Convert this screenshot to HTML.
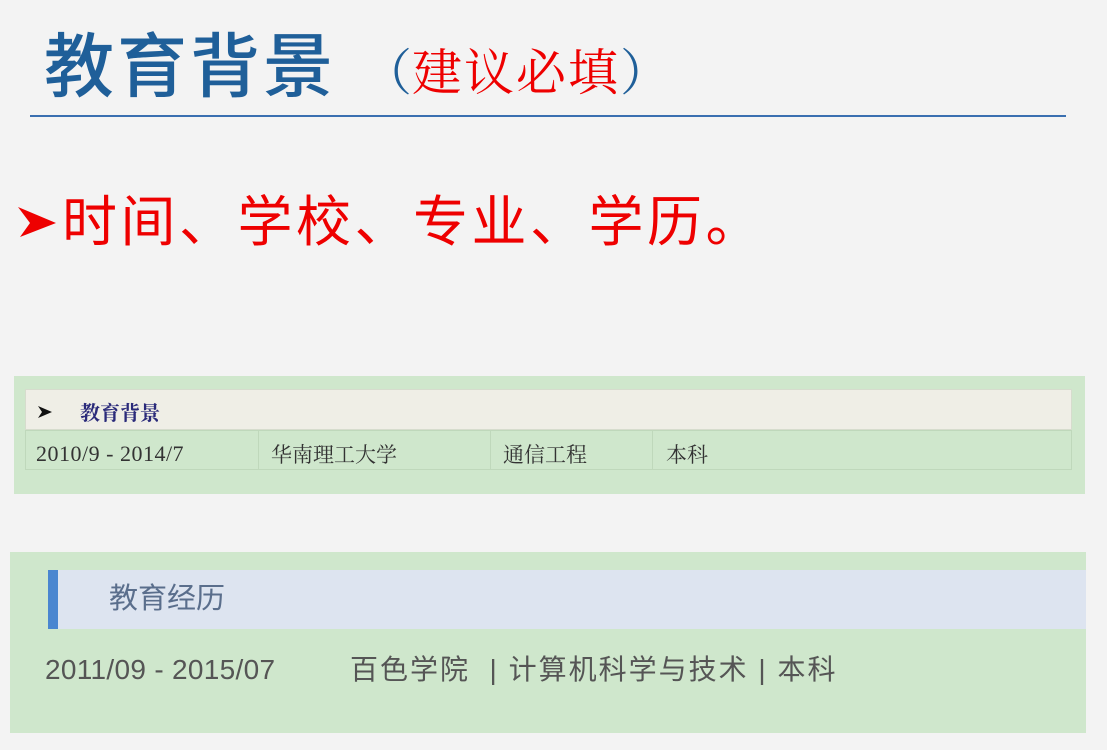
<!DOCTYPE html>
<html><head><meta charset="utf-8"><style>
body{margin:0;width:1107px;height:750px;background:#f3f3f3;position:relative;overflow:hidden;font-family:"Liberation Sans","Noto Sans CJK SC",sans-serif}
.a{position:absolute;white-space:nowrap}
</style></head><body>
<div class="a" style="left:44px;top:17px;font-size:70px;font-weight:500;color:#1f5f99;line-height:90px;letter-spacing:3px;font-family:'Noto Sans CJK SC',sans-serif">教育背景</div>
<div class="a" style="left:362px;top:34px;font-size:50px;line-height:70px;color:#1f5f99;font-family:'Noto Serif CJK SC',serif">（<span style="color:#e00;letter-spacing:2px">建议必填</span>）</div>
<div class="a" style="left:30px;top:115px;width:1036px;height:2px;background:#3a6fb0"></div>
<svg class="a" style="left:18px;top:205px" width="40" height="32" viewBox="0 0 40 32"><path d="M0 2 L38 18 L2 32 L12 18 Z" fill="#e00"/></svg>
<div class="a" style="left:62px;top:180px;font-size:55px;color:#e00;line-height:75px;letter-spacing:3.5px;font-family:'Noto Sans CJK SC',sans-serif">时间、学校、专业、学历。</div>

<div class="a" style="left:14px;top:376px;width:1071px;height:118px;background:#cfe7cc"></div>
<div class="a" style="left:25px;top:389px;width:1047px;height:41px;background:#efeee6;border:1px solid #d6dccd;box-sizing:border-box"></div>
<svg class="a" style="left:38px;top:406px" width="14" height="12" viewBox="0 0 14 12"><path d="M0 0 L14 6 L0 12 L4 6 Z" fill="#111"/></svg>
<div class="a" style="left:80px;top:400px;font-size:20px;color:#2a2a7a;line-height:24px;font-family:'Noto Serif CJK SC',serif;font-weight:bold">教育背景</div>
<div class="a" style="left:25px;top:430px;width:1047px;height:40px;border:1px solid #bfd8bb;box-sizing:border-box"></div>
<div class="a" style="left:258px;top:430px;width:1px;height:40px;background:#bfd8bb"></div>
<div class="a" style="left:490px;top:430px;width:1px;height:40px;background:#bfd8bb"></div>
<div class="a" style="left:652px;top:430px;width:1px;height:40px;background:#bfd8bb"></div>
<div class="a" style="left:36px;top:442px;font-size:22px;line-height:24px;color:#333;font-family:'Liberation Serif','Noto Serif CJK SC',serif;letter-spacing:0.5px">2010/9 - 2014/7</div>
<div class="a" style="left:271px;top:442px;font-size:21px;line-height:24px;color:#333;font-family:'Noto Serif CJK SC',serif">华南理工大学</div>
<div class="a" style="left:503px;top:442px;font-size:21px;line-height:24px;color:#333;font-family:'Noto Serif CJK SC',serif">通信工程</div>
<div class="a" style="left:666px;top:442px;font-size:21px;line-height:24px;color:#333;font-family:'Noto Serif CJK SC',serif">本科</div>

<div class="a" style="left:10px;top:552px;width:1076px;height:181px;background:#cfe7cc"></div>
<div class="a" style="left:48px;top:570px;width:1038px;height:59px;background:#dde4f0"></div>
<div class="a" style="left:48px;top:570px;width:10px;height:59px;background:#4a86d0"></div>
<div class="a" style="left:109px;top:580px;font-size:29px;line-height:38px;color:#5a6e8c">教育经历</div>
<div class="a" style="left:45px;top:651px;font-size:28px;line-height:38px;color:#555;letter-spacing:0.3px">2011/09 - 2015/07</div>
<div class="a" style="left:350px;top:651px;font-size:28px;line-height:38px;color:#555;letter-spacing:2px">百色学院 &nbsp;| 计算机科学与技术 | 本科</div>
</body></html>
